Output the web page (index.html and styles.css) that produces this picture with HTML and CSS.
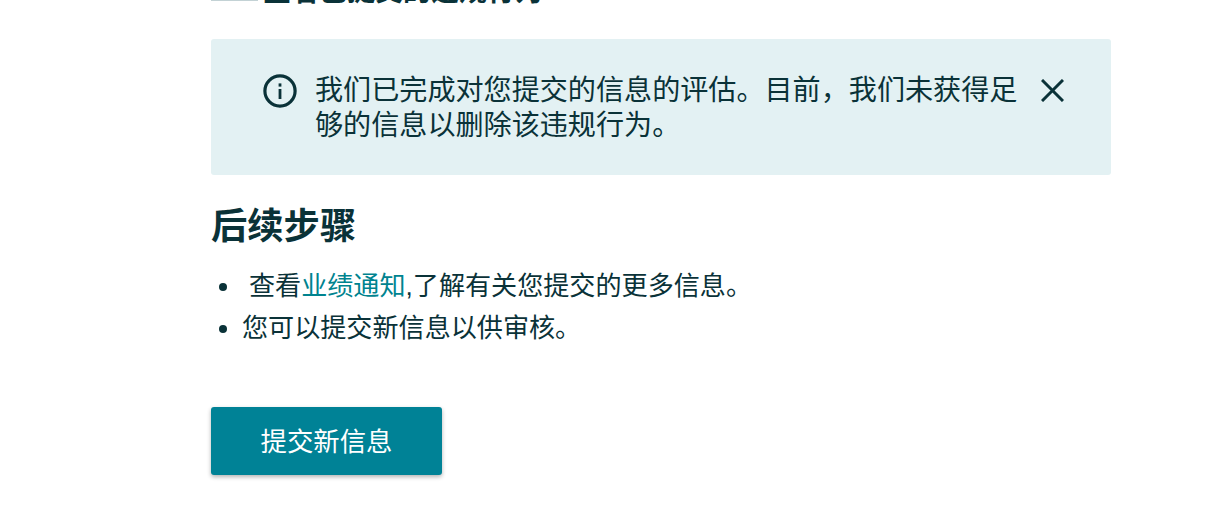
FILE: index.html
```html
<!DOCTYPE html>
<html lang="zh-CN">
<head>
    <meta charset="UTF-8">
    <title>后续步骤</title>
    <link rel="stylesheet" href="styles.css">
</head>
<body>
    <main class="content">
        <div class="page-title">
            <span class="title-bar"></span>
            <span class="title-text">查看已提交的违规行为</span>
        </div>

        <div class="alert">
            <svg class="alert-icon" viewBox="0 0 34 34" width="34" height="34">
                <circle cx="17" cy="17" r="15.1" fill="none" stroke="#0a3238" stroke-width="3.2"/>
                <rect x="15.6" y="15" width="2.8" height="10" fill="#0a3238"/>
                <rect x="15.6" y="9.4" width="2.8" height="3.2" fill="#0a3238"/>
            </svg>
            <p class="alert-text">我们已完成对您提交的信息的评估。目前，我们未获得足够的信息以删除该违规行为。</p>
            <svg class="alert-close" viewBox="0 0 23 23" width="23" height="23">
                <path d="M1 1 L22 22 M22 1 L1 22" fill="none" stroke="#0a3238" stroke-width="3"/>
            </svg>
        </div>

        <h2 class="next-title">后续步骤</h2>
        <ul class="next-list">
            <li><span class="indent">查看<a href="#">业绩通知</a>,了解有关您提交的更多信息。</span></li>
            <li>您可以提交新信息以供审核。</li>
        </ul>

        <button class="submit-btn">提交新信息</button>
    </main>
</body>
</html>
```

FILE: styles.css
```css
html, body {
    margin: 0;
    padding: 0;
    height: 529px;
    overflow: hidden;
    background-color: #fff;
}

body {
    font-family: 'Liberation Sans', 'Noto Sans CJK SC', sans-serif;
    color: #0a3238;
}

.content {
    width: 900px;
    margin-left: 211px;
    margin-top: -17px;
}

/* the top of the page is scrolled out of view, only the bottom edge shows */
.page-title {
    display: flex;
    align-items: flex-end;
    gap: 5px;
    height: 26px;
    overflow: hidden;
}

.title-bar {
    flex: none;
    width: 47px;
    height: 18px;
    margin-bottom: 8px;
    background-color: #c3d2d5;
}

.title-text {
    font-size: 28px;
    line-height: 34px;
    font-weight: 700;
}

.alert {
    display: flex;
    align-items: flex-start;
    box-sizing: border-box;
    height: 136px;
    margin-top: 30px;
    padding: 35px 47px 0 52px;
    background-color: #e3f1f3;
    border-radius: 3px;
}

.alert-icon {
    flex: none;
}

.alert-text {
    flex: 1;
    margin: -1px 22px 0 18px;
    font-size: 28.1px;
    line-height: 35px;
}

.alert-close {
    flex: none;
    margin-top: 5px;
}

.next-title {
    margin: 30px 0 0;
    font-size: 36.3px;
    line-height: 44px;
    font-weight: 700;
}

.next-list {
    margin: 16px 0 0;
    padding: 0 0 0 31px;
    font-size: 26.1px;
    line-height: 42px;
}

.indent {
    margin-left: 7px;
}

.next-list a {
    color: #00838f;
    text-decoration: none;
}

.submit-btn {
    display: block;
    width: 231px;
    height: 68px;
    margin-top: 58px;
    padding: 0 0 4px;
    border: none;
    border-radius: 3px;
    background-color: #008296;
    color: #fff;
    font-family: inherit;
    font-size: 26.4px;
    box-shadow: 0 2px 4px rgba(0, 0, 0, 0.3);
}
```
